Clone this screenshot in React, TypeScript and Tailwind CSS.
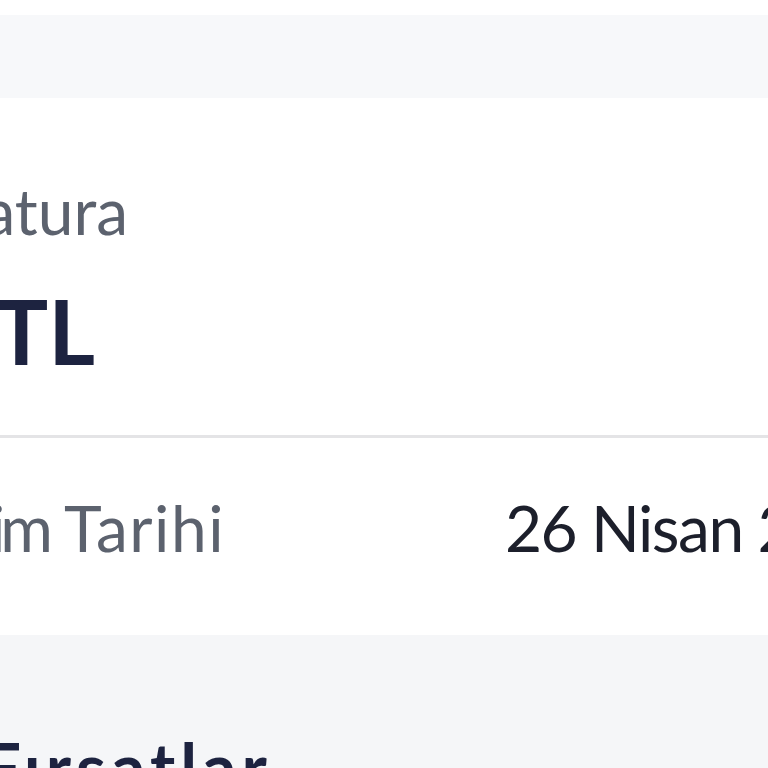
export default function App() {
  return (
    <div className="w-[768px] h-[768px] overflow-hidden bg-white flex flex-col" style={{ fontFamily: "Lato, 'Noto Sans', sans-serif" }}>
      <div className="h-[15px] shrink-0 bg-white" />
      <div className="h-[83px] shrink-0 bg-[#f7f8fa] shadow-[0_2px_3px_rgba(0,0,0,0.03)]" />
      <div className="h-[537px] shrink-0 bg-white flex flex-col pt-[81px]">
        <div className="flex justify-end w-[128px] shrink-0">
          <span className="text-[64px] leading-none text-[#5c626e] whitespace-nowrap">Son Fatura</span>
        </div>
        <div className="flex justify-end w-[95px] mt-[42px] shrink-0">
          <span className="text-[90px] leading-none font-bold text-[#1d2340] whitespace-nowrap">1.248,90 TL</span>
        </div>
        <div className="mt-[60px] h-[3px] bg-[#e4e4e6] shrink-0" />
        <div className="mt-[58px] flex items-start shrink-0">
          <div className="flex justify-end w-[225px] shrink-0">
            <span className="text-[64px] leading-none text-[#5c626e] whitespace-nowrap">
              <span className="tracking-[-5px]">Kesim</span>
              <span className="tracking-[1.5px]"> Tarihi</span>
            </span>
          </div>
          <span className="ml-[280px] text-[64px] leading-none tracking-[-1.5px] text-[#1c1f2b] whitespace-nowrap">26 Nisan 2024</span>
        </div>
      </div>
      <div className="flex-1 bg-[#f5f6f8] pt-[98px]">
        <div className="flex justify-end w-[272px]">
          <span className="text-[68px] leading-none tracking-[5px] font-bold text-[#1d2340] whitespace-nowrap">Fırsatlar</span>
        </div>
      </div>
    </div>
  );
}
